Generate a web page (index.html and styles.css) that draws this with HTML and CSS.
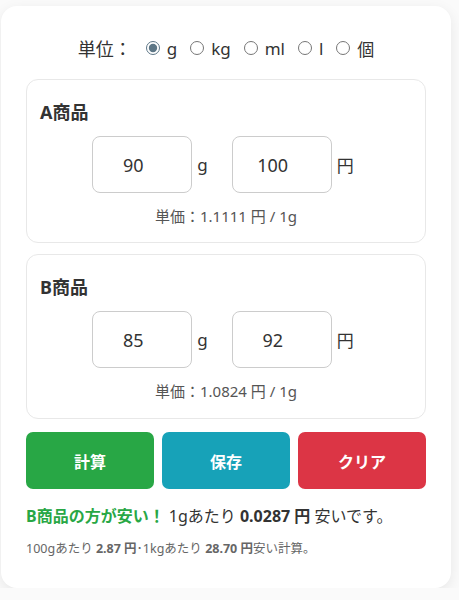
FILE: index.html
```html
<!DOCTYPE html>
<html lang="ja">
<head>
<meta charset="utf-8">
<title>単価比較</title>
<link rel="stylesheet" href="styles.css">
</head>
<body>
<div class="card">
  <div class="units">
    <span class="units-label">単位：</span>
    <label class="unit"><input type="radio" name="unit" checked>g</label>
    <label class="unit"><input type="radio" name="unit">kg</label>
    <label class="unit"><input type="radio" name="unit">ml</label>
    <label class="unit"><input type="radio" name="unit">l</label>
    <label class="unit"><input type="radio" name="unit">個</label>
  </div>

  <section class="item">
    <h3 class="item-title">A商品</h3>
    <div class="fields">
      <div class="field"><input class="num" type="text" value="90"><span class="suffix">g</span></div>
      <div class="field"><input class="num" type="text" value="100"><span class="suffix">円</span></div>
    </div>
    <p class="price">単価：1.1111 円 / 1g</p>
  </section>

  <section class="item">
    <h3 class="item-title">B商品</h3>
    <div class="fields">
      <div class="field"><input class="num" type="text" value="85"><span class="suffix">g</span></div>
      <div class="field"><input class="num" type="text" value="92"><span class="suffix">円</span></div>
    </div>
    <p class="price">単価：1.0824 円 / 1g</p>
  </section>

  <div class="buttons">
    <button class="btn btn-calc">計算</button>
    <button class="btn btn-save">保存</button>
    <button class="btn btn-clear">クリア</button>
  </div>

  <p class="result"><span class="winner">B商品の方が安い！</span> 1gあたり <b>0.0287 円</b> 安いです。</p>
  <p class="detail">100gあたり <b>2.87 円</b>･1kgあたり <b>28.70 円</b>安い計算。</p>
</div>
</body>
</html>
```

FILE: styles.css
```css
* { box-sizing: border-box; }

html, body {
  margin: 0;
  padding: 0;
  background: #fafafa;
}

body {
  font-family: "Noto Sans", "Noto Sans CJK JP", sans-serif;
  color: #333;
  padding: 6px 0 0 1px;
}

.card {
  width: 450px;
  background: #fff;
  border-radius: 16px;
  box-shadow: 0 4px 14px rgba(0, 0, 0, 0.08);
  padding: 25px 25px 30px;
}

.units {
  display: flex;
  justify-content: center;
  align-items: center;
  height: 34px;
  font-size: 17px;
  margin-bottom: 14px;
}

.units-label {
  margin-right: 14px;
  font-size: 18px;
}

.unit {
  display: inline-flex;
  align-items: center;
  margin-right: 13px;
}
.unit:last-child { margin-right: 0; }

.unit input {
  margin: 0 7px 0 0;
  width: 14px;
  height: 14px;
  accent-color: #5d7686;
}

.item {
  border: 1px solid #e8e8e8;
  border-radius: 12px;
  padding: 19px 13px 15px;
  margin-bottom: 11px;
}

.item + .item {
  padding-bottom: 16px;
}

.item-title {
  margin: 0 0 11px;
  font-size: 18px;
  font-weight: 700;
  line-height: 26px;
  color: #333;
}

.fields {
  display: flex;
  justify-content: center;
  gap: 24px;
  padding-right: 6px;
}

.field {
  display: flex;
  align-items: center;
  gap: 5px;
}

.num {
  width: 100px;
  height: 57px;
  border: 1px solid #ccc;
  border-radius: 8px;
  font: inherit;
  font-size: 18px;
  color: #333;
  text-align: center;
  padding: 0 18px 0 0;
  background: #fff;
}

.suffix {
  font-size: 17px;
  color: #333;
}

.price {
  margin: 13px 0 0;
  font-size: 15px;
  line-height: 21px;
  color: #555;
  text-align: center;
}

.buttons {
  display: grid;
  grid-template-columns: repeat(3, 1fr);
  gap: 8px;
  margin-top: 13px;
}

.btn {
  height: 57px;
  border: none;
  border-radius: 7px;
  color: #fff;
  font: inherit;
  font-size: 16px;
  font-weight: 700;
}

.btn-calc { background: #28a745; }
.btn-save { background: #17a2b8; }
.btn-clear { background: #dc3545; }

.result {
  margin: 15px 0 0;
  font-size: 16px;
  line-height: 24px;
  color: #333;
}

.winner {
  color: #28a745;
  font-weight: 700;
}

.detail {
  margin: 12px 0 0;
  font-size: 12.5px;
  line-height: 18px;
  color: #666;
}
```
